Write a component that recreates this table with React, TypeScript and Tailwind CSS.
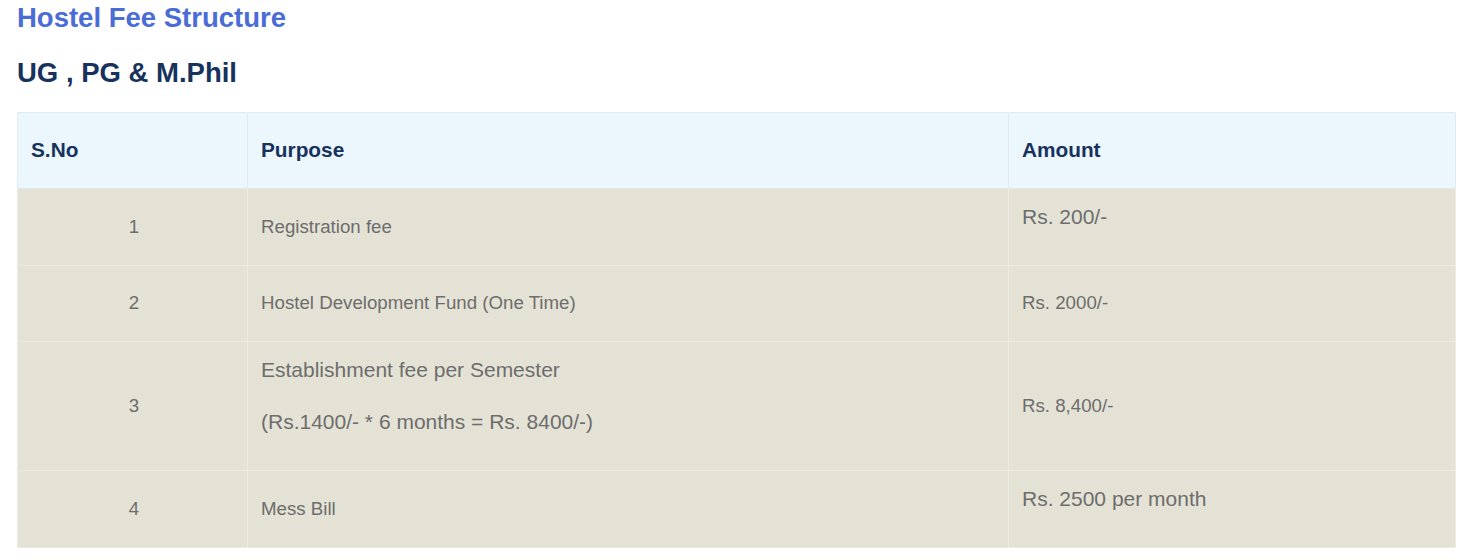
import React from "react";

const cellB = "border border-[#ecebe2] pl-[13px] pr-[14px] py-[12px] align-middle";
const cellC = "border border-[#ecebe2] pl-[15px] pr-[12px] py-[12px] align-middle text-center";

export default function App() {
  return (
    <div className="bg-white w-[1476px] h-[560px] overflow-hidden font-['Liberation_Sans',Arial,sans-serif] px-[17px]">
      <h2 className="text-[27.5px] leading-[36px] font-bold text-[#4a6cd6]">Hostel Fee Structure</h2>
      <h3 className="text-[27.5px] leading-[36px] font-bold text-[#17325c] mt-[19px]">UG , PG &amp; M.Phil</h3>
      <table className="mt-[21px] w-[1438px] border-collapse table-fixed">
        <colgroup>
          <col className="w-[230px]" />
          <col className="w-[761px]" />
          <col className="w-[447px]" />
        </colgroup>
        <thead>
          <tr className="bg-[#ebf6fd] h-[76px]">
            <th className="border border-[#dfeaf1] pl-[13px] pr-[14px] pb-[2px] text-left text-[20.8px] font-bold text-[#17325c]">S.No</th>
            <th className="border border-[#dfeaf1] pl-[13px] pr-[14px] pb-[2px] text-left text-[20.8px] font-bold text-[#17325c]">Purpose</th>
            <th className="border border-[#dfeaf1] pl-[13px] pr-[14px] pb-[2px] text-left text-[20.8px] font-bold text-[#17325c]">Amount</th>
          </tr>
        </thead>
        <tbody className="bg-[#e4e2d5] text-[#6d6d6d] text-[18.7px]">
          <tr className="h-[76px]">
            <td className={cellC}>1</td>
            <td className={cellB}>Registration fee</td>
            <td className={cellB}><p className="text-[21px] leading-[32px] mb-[20px]">Rs. 200/-</p></td>
          </tr>
          <tr className="h-[76px]">
            <td className={cellC}>2</td>
            <td className={cellB}>Hostel Development Fund (One Time)</td>
            <td className={cellB}>Rs. 2000/-</td>
          </tr>
          <tr>
            <td className={cellC}>3</td>
            <td className={cellB}>
              <p className="text-[21px] leading-[32px] mb-[20px]">Establishment fee per Semester</p>
              <p className="text-[21px] leading-[32px] mb-[20px]">(Rs.1400/- * 6 months = Rs. 8400/-)</p>
            </td>
            <td className={cellB}>Rs. 8,400/-</td>
          </tr>
          <tr className="h-[76px]">
            <td className={cellC}>4</td>
            <td className={cellB}>Mess Bill</td>
            <td className={cellB}><p className="text-[21px] leading-[32px] mb-[20px]">Rs. 2500 per month</p></td>
          </tr>
        </tbody>
      </table>
    </div>
  );
}
